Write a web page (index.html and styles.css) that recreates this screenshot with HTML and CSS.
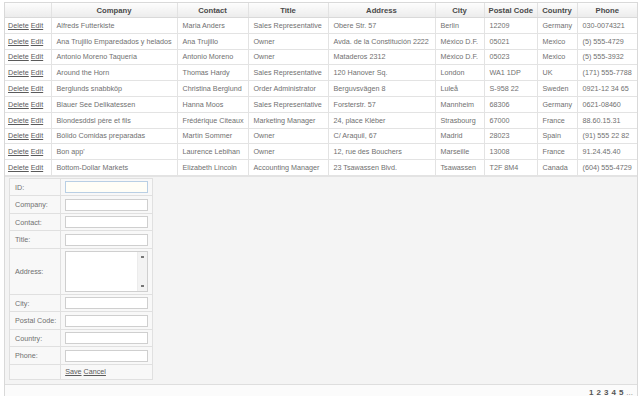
FILE: index.html
```html
<!DOCTYPE html>
<html>
<head>
    <title>Customers</title>
    <meta name="viewport" content="width=device-width, initial-scale=1.0">
    <link rel="stylesheet" href="styles.css">
</head>
<body>
    <div class="grid">
        <table class="rows">
            <colgroup>
                <col style="width: 46px">
                <col style="width: 126px">
                <col style="width: 71px">
                <col style="width: 80px">
                <col style="width: 107px">
                <col style="width: 49px">
                <col style="width: 53px">
                <col style="width: 40px">
                <col style="width: 60px">
            </colgroup>
            <thead>
                <tr>
                    <th></th>
                    <th>Company</th>
                    <th>Contact</th>
                    <th>Title</th>
                    <th>Address</th>
                    <th>City</th>
                    <th>Postal Code</th>
                    <th>Country</th>
                    <th>Phone</th>
                </tr>
            </thead>
            <tbody>
                <tr><td class="cmd"><a href="#">Delete</a> <a href="#">Edit</a></td><td>Alfreds Futterkiste</td><td>Maria Anders</td><td>Sales Representative</td><td>Obere Str. 57</td><td>Berlin</td><td>12209</td><td>Germany</td><td>030-0074321</td></tr>
                <tr><td class="cmd"><a href="#">Delete</a> <a href="#">Edit</a></td><td>Ana Trujillo Emparedados y helados</td><td>Ana Trujillo</td><td>Owner</td><td>Avda. de la Constitución 2222</td><td>México D.F.</td><td>05021</td><td>Mexico</td><td>(5) 555-4729</td></tr>
                <tr><td class="cmd"><a href="#">Delete</a> <a href="#">Edit</a></td><td>Antonio Moreno Taquería</td><td>Antonio Moreno</td><td>Owner</td><td>Mataderos 2312</td><td>México D.F.</td><td>05023</td><td>Mexico</td><td>(5) 555-3932</td></tr>
                <tr><td class="cmd"><a href="#">Delete</a> <a href="#">Edit</a></td><td>Around the Horn</td><td>Thomas Hardy</td><td>Sales Representative</td><td>120 Hanover Sq.</td><td>London</td><td>WA1 1DP</td><td>UK</td><td>(171) 555-7788</td></tr>
                <tr><td class="cmd"><a href="#">Delete</a> <a href="#">Edit</a></td><td>Berglunds snabbköp</td><td>Christina Berglund</td><td>Order Administrator</td><td>Berguvsvägen 8</td><td>Luleå</td><td>S-958 22</td><td>Sweden</td><td>0921-12 34 65</td></tr>
                <tr><td class="cmd"><a href="#">Delete</a> <a href="#">Edit</a></td><td>Blauer See Delikatessen</td><td>Hanna Moos</td><td>Sales Representative</td><td>Forsterstr. 57</td><td>Mannheim</td><td>68306</td><td>Germany</td><td>0621-08460</td></tr>
                <tr><td class="cmd"><a href="#">Delete</a> <a href="#">Edit</a></td><td>Blondesddsl père et fils</td><td>Frédérique Citeaux</td><td>Marketing Manager</td><td>24, place Kléber</td><td>Strasbourg</td><td>67000</td><td>France</td><td>88.60.15.31</td></tr>
                <tr><td class="cmd"><a href="#">Delete</a> <a href="#">Edit</a></td><td>Bólido Comidas preparadas</td><td>Martín Sommer</td><td>Owner</td><td>C/ Araquil, 67</td><td>Madrid</td><td>28023</td><td>Spain</td><td>(91) 555 22 82</td></tr>
                <tr><td class="cmd"><a href="#">Delete</a> <a href="#">Edit</a></td><td>Bon app'</td><td>Laurence Lebihan</td><td>Owner</td><td>12, rue des Bouchers</td><td>Marseille</td><td>13008</td><td>France</td><td>91.24.45.40</td></tr>
                <tr><td class="cmd"><a href="#">Delete</a> <a href="#">Edit</a></td><td>Bottom-Dollar Markets</td><td>Elizabeth Lincoln</td><td>Accounting Manager</td><td>23 Tsawassen Blvd.</td><td>Tsawassen</td><td>T2F 8M4</td><td>Canada</td><td>(604) 555-4729</td></tr>
            </tbody>
        </table>

        <div class="editor">
            <table class="form">
                <tr><td class="label">ID:</td><td><div class="input focus"></div></td></tr>
                <tr><td class="label">Company:</td><td><div class="input"></div></td></tr>
                <tr><td class="label">Contact:</td><td><div class="input"></div></td></tr>
                <tr><td class="label">Title:</td><td><div class="input"></div></td></tr>
                <tr class="tall">
                    <td class="label">Address:</td>
                    <td>
                        <div class="textarea">
                            <div class="scroll">
                                <span class="arrow"></span>
                                <span class="arrow"></span>
                            </div>
                        </div>
                    </td>
                </tr>
                <tr><td class="label">City:</td><td><div class="input"></div></td></tr>
                <tr><td class="label">Postal Code:</td><td><div class="input"></div></td></tr>
                <tr><td class="label">Country:</td><td><div class="input"></div></td></tr>
                <tr><td class="label">Phone:</td><td><div class="input"></div></td></tr>
                <tr class="actions"><td></td><td><a href="#">Save</a> <a href="#">Cancel</a></td></tr>
            </table>
        </div>

        <div class="pager">
            <a href="#" class="current">1</a>
            <a href="#">2</a>
            <a href="#">3</a>
            <a href="#">4</a>
            <a href="#">5</a>
            <a href="#" class="more">...</a>
        </div>
    </div>
</body>
</html>
```

FILE: styles.css
```css
body {
    margin: 0;
    background-color: #fff;
    font-family: "Liberation Sans", Arial, sans-serif;
    font-size: 7.2px;
    color: #707070;
}

a {
    color: #5a5a5a;
}

.grid {
    margin: 2px 2px 0 4px;
    border: 1px solid #d9d9d9;
    background-color: #f4f4f4;
}

/* Customer rows */
.rows {
    width: 632px;
    table-layout: fixed;
    border-collapse: collapse;
    background-color: #fff;
}

.rows th {
    height: 14px;
    padding: 0 4px;
    font-size: 7.7px;
    font-weight: bold;
    color: #4a4a4a;
    text-align: center;
    background: linear-gradient(#fdfdfd, #ececec);
    border-right: 1px solid #e2e2e2;
    border-bottom: 1px solid #d9d9d9;
    white-space: nowrap;
}

.rows td {
    height: 14.8px;
    padding: 0 5px;
    border-right: 1px solid #e3e3e3;
    border-bottom: 1px solid #e3e3e3;
    white-space: nowrap;
    overflow: hidden;
}

.rows th:last-child,
.rows td:last-child {
    border-right: none;
}

.rows td.cmd {
    padding-left: 3px;
}

/* Edit form */
.editor {
    padding: 1px 4px 4px 4px;
    border-top: 1px solid #e3e3e3;
}

.form {
    width: 144px;
    border-collapse: collapse;
    border: 1px solid #dadada;
    background-color: #f8f8f8;
}

.form td {
    height: 16.5px;
    padding: 0 4px;
    border: 1px solid #e0e0e0;
}

.form td.label {
    width: 41px;
    padding-left: 5px;
    white-space: nowrap;
}

.input {
    height: 10px;
    border: 1px solid #cfcfcf;
    background-color: #fff;
}

.input.focus {
    border-color: #b9cfe4;
    background-color: #fffef7;
}

.form tr.tall td {
    height: 45px;
}

.textarea {
    height: 39px;
    border: 1px solid #cfcfcf;
    background-color: #fff;
    display: flex;
    justify-content: flex-end;
}

.scroll {
    width: 9px;
    background-color: #f3f3f3;
    border-left: 1px solid #ececec;
    display: flex;
    flex-direction: column;
    justify-content: space-between;
    align-items: center;
    padding: 4px 0;
}

.arrow {
    width: 3px;
    height: 2px;
    background-color: #777;
}

.form tr.actions td {
    height: 14px;
}

/* Pager */
.pager {
    border-top: 1px solid #dedede;
    background-color: #fbfbfb;
    height: 15px;
    display: flex;
    justify-content: flex-end;
    align-items: center;
    gap: 3px;
    padding-right: 4px;
}

.pager a {
    font-size: 8px;
    color: #555;
    text-decoration: none;
    font-weight: bold;
}

.pager a.more {
    font-weight: normal;
    color: #888;
}
```
